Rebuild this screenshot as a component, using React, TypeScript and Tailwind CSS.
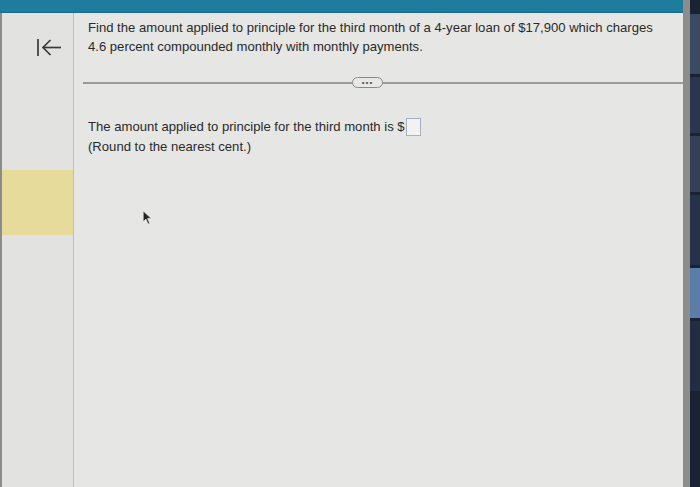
import React from "react";

export default function App() {
  return (
    <div className="w-[700px] h-[487px] overflow-hidden flex bg-[#1b2638] relative" style={{ fontFamily: '"Liberation Sans", Arial, sans-serif' }}>
      <div className="flex flex-col w-[683px] h-full bg-[#e6e6e4]">
        <div className="h-[13px] bg-[#1e7c9c] border-b border-[#176a88]" />
        <div className="flex flex-1">
          <div className="w-[74px] flex flex-col bg-[#e2e2e0] border-l-[2px] border-l-[#8c8c8c] border-r border-r-[#bdbdbb]">
            <div className="h-[157px] flex pl-[34px] pt-[25px]">
              <svg width="26" height="19" viewBox="0 0 26 19" fill="none" stroke="#3a3a3a" strokeWidth="1.7">
                <path d="M2 1 V18" />
                <path d="M7 9.5 H25" />
                <path d="M14.5 2 L7 9.5 L14.5 17" />
              </svg>
            </div>
            <div className="h-[65px] bg-[#e6db9a]" />
            <div className="flex-1" />
          </div>
          <div className="flex-1 flex flex-col text-[#2a2a2a] text-[13.1px] leading-[19px] relative">
            <div className="pl-[14px] pr-[10px] pt-[5px] whitespace-nowrap">
              <p>Find the amount applied to principle for the third month of a 4-year loan of $17,900 which charges</p>
              <p>4.6 percent compounded monthly with monthly payments.</p>
            </div>
            <div className="relative mt-[26px] ml-[9px] h-[2px] bg-[#9a9a98]">
              <div className="absolute left-[269px] top-[-5px] w-[31px] h-[11px] rounded-full border border-[#8a8a8a] bg-[#e8e8e6] flex items-center justify-center text-[8px] leading-none text-[#555] tracking-[1px]">•••</div>
            </div>
            <div className="pl-[14px] pt-[33px] leading-[20px]">
              <p className="flex items-center whitespace-nowrap">
                The amount applied to principle for the third month is $
                <span className="inline-block w-[15px] h-[18px] border border-[#a9b0c4] bg-[#f2f2f2] ml-[1px]" />
              </p>
              <p>(Round to the nearest cent.)</p>
            </div>
            <svg className="absolute left-[68px] top-[197px]" width="11" height="15" viewBox="0 0 10 14">
              <path d="M1 1 L1 11 L3.5 8.5 L5.5 13 L7 12.3 L5 8 L8.5 8 Z" fill="#222" stroke="#eee" strokeWidth="0.6" />
            </svg>
          </div>
        </div>
      </div>
      <div className="w-[7px] h-full bg-[#8d8d8d]" />
      <div className="flex-1 h-full flex flex-col gap-[3px] bg-[#1a2234] pt-[14px]">
        <div className="h-[60px] bg-[#3a4a62]" />
        <div className="h-[56px] bg-[#2a3650]" />
        <div className="h-[56px] bg-[#334058]" />
        <div className="h-[70px] bg-[#26324a]" />
        <div className="h-[50px] bg-[#5a7ea8]" />
        <div className="h-[70px] bg-[#222c42]" />
      </div>
    </div>
  );
}
